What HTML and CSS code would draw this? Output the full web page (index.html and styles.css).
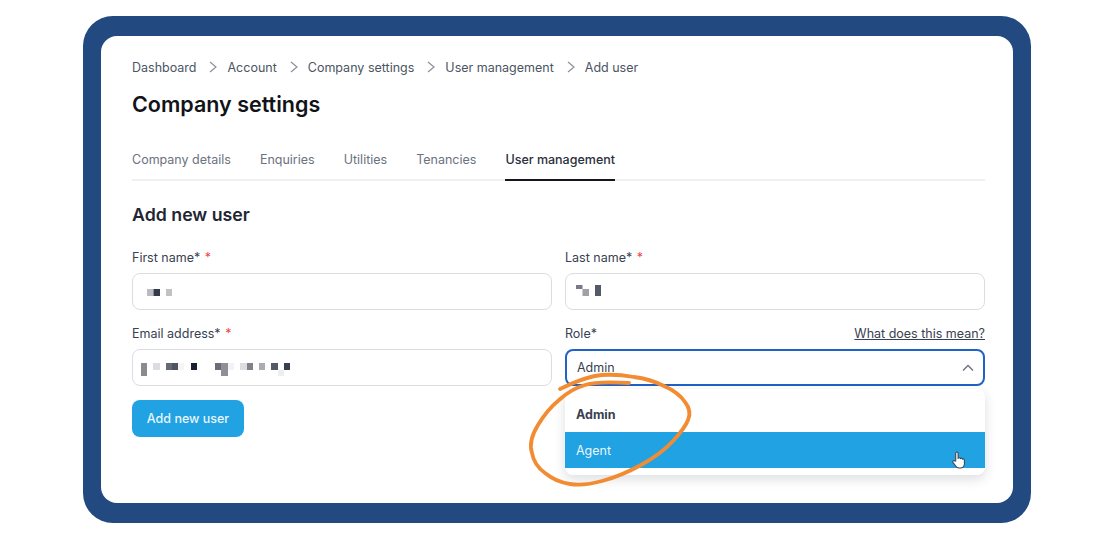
FILE: index.html
```html
<!DOCTYPE html>
<html lang="en">
<head>
<meta charset="utf-8">
<title>Company settings</title>
<link rel="stylesheet" href="styles.css">
</head>
<body>
<div class="frame">
  <main class="card">
    <nav class="crumbs">
      <a>Dashboard</a>
      <svg class="chev" viewBox="0 0 8 12"><path d="M1 1l6 5-6 5"/></svg>
      <a>Account</a>
      <svg class="chev" viewBox="0 0 8 12"><path d="M1 1l6 5-6 5"/></svg>
      <a>Company settings</a>
      <svg class="chev" viewBox="0 0 8 12"><path d="M1 1l6 5-6 5"/></svg>
      <a>User management</a>
      <svg class="chev" viewBox="0 0 8 12"><path d="M1 1l6 5-6 5"/></svg>
      <a>Add user</a>
    </nav>
    <h1 class="title">Company settings</h1>
    <div class="tabs">
      <a class="tab">Company details</a>
      <a class="tab">Enquiries</a>
      <a class="tab">Utilities</a>
      <a class="tab">Tenancies</a>
      <a class="tab tab-active">User management</a>
    </div>
    <h2 class="subtitle">Add new user</h2>
    <form class="grid">
      <div class="field">
        <div class="label-row"><label class="label">First name* <span class="req">*</span></label></div>
        <div class="input">
          <svg class="mosaic" width="30" height="11" viewBox="0 0 30 11">
            <rect x="0" y="3" width="6.5" height="7" fill="#bcbcc0"/>
            <rect x="6.5" y="3" width="6.5" height="7" fill="#333a4a"/>
            <rect x="19" y="3" width="6" height="7" fill="#c2c2c5"/>
          </svg>
        </div>
      </div>
      <div class="field">
        <div class="label-row"><label class="label">Last name* <span class="req">*</span></label></div>
        <div class="input input-tight">
          <svg class="mosaic" width="30" height="11" viewBox="0 0 30 11">
            <rect x="0" y="0" width="6.5" height="4" fill="#777b85"/>
            <rect x="6.5" y="4" width="6.5" height="7" fill="#a0a0a6"/>
            <rect x="19" y="0" width="6" height="11" fill="#555a68"/>
          </svg>
        </div>
      </div>
      <div class="field">
        <div class="label-row"><label class="label">Email address* <span class="req">*</span></label></div>
        <div class="input input-email">
          <svg class="mosaic" width="150" height="14" viewBox="0 0 150 14">
            <rect x="0" y="0" width="6" height="13" fill="#8a8a90"/>
            <rect x="12" y="0" width="7" height="7" fill="#dddde0"/>
            <rect x="25" y="0" width="6" height="7" fill="#666a75"/>
            <rect x="31" y="0" width="6" height="7" fill="#4f5462"/>
            <rect x="37" y="0" width="6" height="7" fill="#f5f5f7"/>
            <rect x="50" y="0" width="6" height="7" fill="#1a2030"/>
            <rect x="74" y="0" width="6" height="7" fill="#6a6d78"/>
            <rect x="80" y="0" width="7" height="13" fill="#8f9096"/>
            <rect x="87" y="0" width="6" height="7" fill="#f3f3f5"/>
            <rect x="99" y="0" width="7" height="7" fill="#dddde0"/>
            <rect x="106" y="0" width="6" height="7" fill="#7f828b"/>
            <rect x="118" y="0" width="6" height="7" fill="#aaacb1"/>
            <rect x="130" y="0" width="7" height="7" fill="#555a68"/>
            <rect x="137" y="7" width="6" height="6" fill="#eeeef0"/>
            <rect x="143" y="0" width="6" height="7" fill="#3a3f4f"/>
          </svg>
        </div>
      </div>
      <div class="field field-role">
        <div class="label-row"><label class="label">Role*</label><a class="help">What does this mean?</a></div>
        <div class="select">
          <span>Admin</span>
          <svg class="caret" viewBox="0 0 12 8"><path d="M1 6.5l5-5 5 5"/></svg>
        </div>
        <ul class="menu">
          <li class="opt opt-selected">Admin</li>
          <li class="opt opt-hover">Agent
            <svg class="hand" viewBox="0 0 14 18">
              <path d="M4.2 10V2.2a1.2 1.2 0 0 1 2.4 0V7.5c.2-1 2.2-1 2.4.2.3-.8 2-.7 2.1.5.4-.5 1.8-.3 1.8 1v3.6c0 2.300-1.700 4.200-4 4.200H7.500c-1.500 0-2.500-.7-3.300-2L1.400 11.300c-.7-1.200.8-2.300 1.800-1.300z" fill="#fff" stroke="#3f4650" stroke-width="1.100" stroke-linejoin="round"/>
            </svg>
          </li>
        </ul>
      </div>
      <div class="actions"><button class="btn" type="button">Add new user</button></div>
    </form>
  </main>
</div>
<svg class="scribble" viewBox="0 0 1114 539" width="1114" height="539">
  <path d="M629 383Q597 381 585 385Q571 389 559 400Q547 410 538 425Q528 441 532 453Q534 465 545 473Q556 482 570 484Q584 486 602 481Q621 476 641 465Q661 454 673 441Q685 428 688 420Q692 411 685 402Q678 392 664 386Q650 379 634 377Q617 374 602 375Q587 376 560 389"/>
</svg>
</body>
</html>
```
FILE: styles.css
```css
* { box-sizing: border-box; }
html, body { margin: 0; padding: 0; }
body {
  position: relative;
  width: 1114px;
  height: 539px;
  overflow: hidden;
  background: #fff;
  font-family: "Inter", "Liberation Sans", sans-serif;
  color: #374151;
  padding-top: 16px;
}
.frame {
  width: 948px;
  height: 507px;
  margin-left: 83px;
  padding: 20px 18px;
  background: #224a80;
  border-radius: 30px;
}
.card {
  height: 467px;
  background: #fff;
  border-radius: 16px;
  padding: 22px 28px 0 31px;
}
.crumbs {
  display: flex;
  align-items: center;
  height: 18px;
  font-size: 12.5px;
  color: #4b5563;
}
.chev {
  width: 8px;
  height: 12px;
  margin: 0 10px 0 13px;
  fill: none;
  stroke: #8b909a;
  stroke-width: 1.200;
}
.title {
  margin: 14px 0 0;
  font-size: 21.5px;
  line-height: 28px;
  font-weight: 600;
  color: #111318;
}
.tabs {
  display: flex;
  gap: 29px;
  margin-top: 30px;
  height: 33px;
  border-bottom: 2px solid #eff0f2;
  font-size: 12.5px;
}
.tab {
  color: #6b7280;
  height: 33px;
  padding-top: 3px;
  line-height: 18px;
}
.tab-active {
  color: #2a303c;
  font-weight: 500;
  border-bottom: 2px solid #14171d;
}
.subtitle {
  margin: 22px 0 0;
  font-size: 17.75px;
  line-height: 24px;
  font-weight: 600;
  color: #1f2633;
}
.grid {
  display: grid;
  grid-template-columns: 420px 420px;
  column-gap: 13px;
  row-gap: 14px;
  margin-top: 21px;
}
.field { position: relative; }
.label-row {
  display: flex;
  justify-content: space-between;
  align-items: center;
  height: 18px;
  margin-bottom: 7px;
  font-size: 12.5px;
}
.label { color: #374151; }
.req { color: #ef4444; margin-left: 1px; }
.help { color: #374151; text-decoration: underline; }
.input {
  display: flex;
  align-items: center;
  height: 37px;
  padding: 0 0 0 14px;
  border: 1px solid #dcdde3;
  border-radius: 8px;
  background: #fff;
}
.input-tight { padding: 0 0 2px 10px; }
.input-email { padding: 5px 0 0 8px; }
.mosaic { display: block; }
.select {
  display: flex;
  align-items: center;
  justify-content: space-between;
  height: 37px;
  padding: 0 9px 0 10px;
  border: 2px solid #1f62c8;
  border-radius: 8px;
  background: #fff;
  font-size: 12.5px;
  color: #374151;
}
.caret {
  width: 12px;
  height: 8px;
  fill: none;
  stroke: #6b7280;
  stroke-width: 1.400;
}
.menu {
  position: absolute;
  z-index: 2;
  top: 65px;
  left: 0;
  right: 0;
  margin: 0;
  padding: 7px 0;
  list-style: none;
  background: #fff;
  border-radius: 8px;
  box-shadow: 0 4px 12px rgba(31, 41, 55, .16);
  font-size: 12.5px;
}
.opt {
  position: relative;
  height: 36px;
  padding-left: 11px;
  line-height: 37px;
}
.opt-selected { font-weight: 700; color: #374151; }
.opt-hover { background: #21a2e2; color: #e8f6fd; }
.hand {
  position: absolute;
  top: 19px;
  right: 19px;
  width: 15px;
  height: 18px;
}
.actions { grid-column: 1; }
.btn {
  display: block;
  width: 112px;
  height: 37px;
  border: 0;
  border-radius: 8px;
  background: #21a2e2;
  color: #e8f6fd;
  font: 500 12.5px "Inter", "Liberation Sans", sans-serif;
}
.scribble {
  position: absolute;
  z-index: 3;
  top: 0;
  left: 0;
  pointer-events: none;
  fill: none;
  stroke: #f28c33;
  stroke-width: 3.800;
  stroke-linecap: round;
}
```
